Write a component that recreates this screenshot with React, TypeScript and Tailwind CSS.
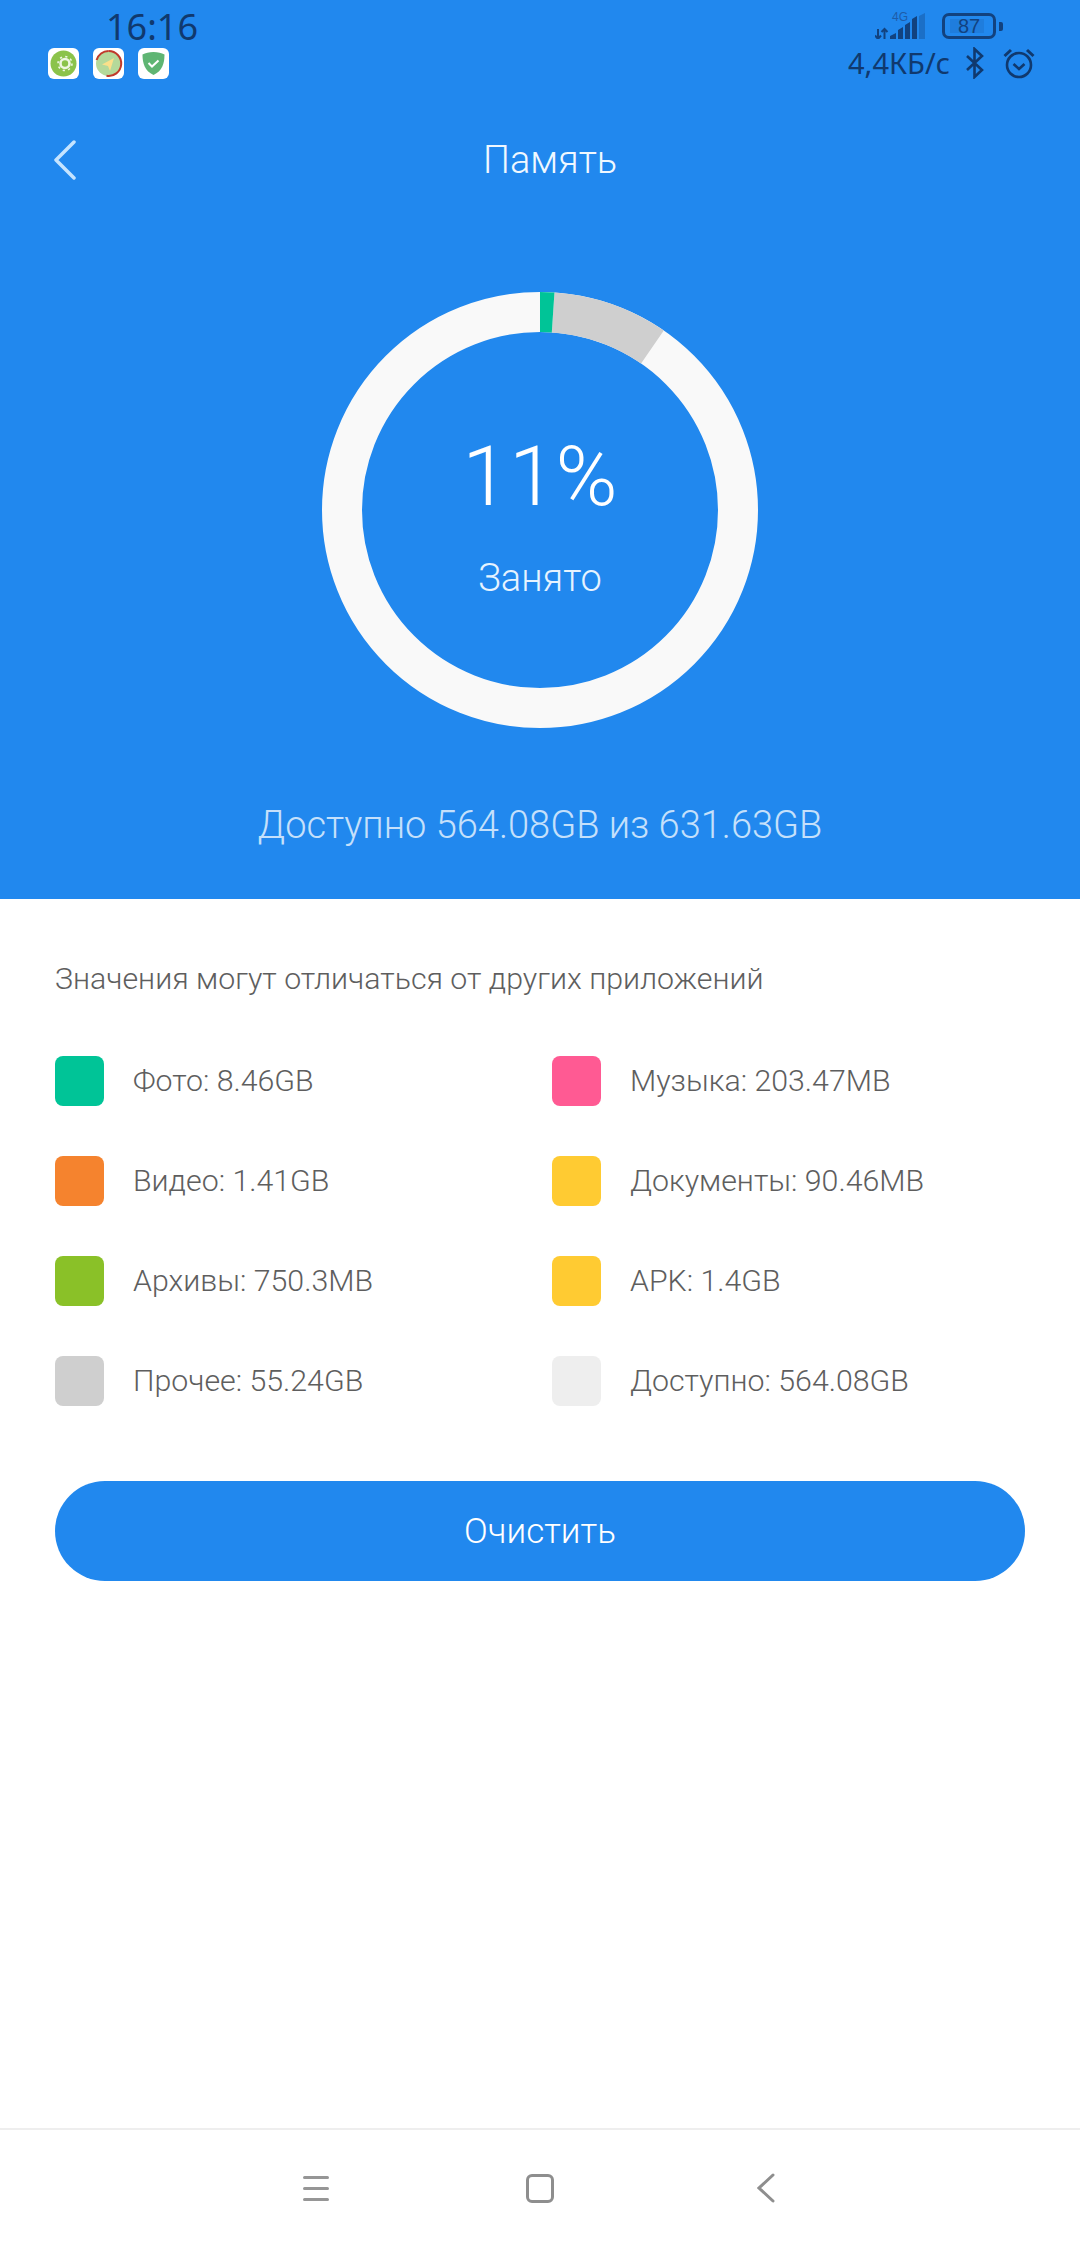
import React from "react";

const legend = [
  { label: "Фото: 8.46GB", color: "bg-[#00c497]" },
  { label: "Музыка: 203.47MB", color: "bg-[#ff5a93]" },
  { label: "Видео: 1.41GB", color: "bg-[#f5832e]" },
  { label: "Документы: 90.46MB", color: "bg-[#ffcb32]" },
  { label: "Архивы: 750.3MB", color: "bg-[#8ac128]" },
  { label: "APK: 1.4GB", color: "bg-[#ffcb32]" },
  { label: "Прочее: 55.24GB", color: "bg-[#cfcfcf]" },
  { label: "Доступно: 564.08GB", color: "bg-[#eeeeee]" },
];

// arc on the donut, angles in degrees clockwise from 12 o'clock
const arcPath = (from: number, to: number, r: number) => {
  const pt = (a: number) => {
    const rad = (a * Math.PI) / 180;
    return `${218 + r * Math.sin(rad)} ${218 - r * Math.cos(rad)}`;
  };
  return `M${pt(from)} A${r} ${r} 0 0 1 ${pt(to)}`;
};

const Donut = () => (
  <svg width="436" height="436" viewBox="0 0 436 436">
    <circle cx="218" cy="218" r="198" fill="none" stroke="#f9f9f9" strokeWidth="40" />
    <path d={arcPath(3.8, 34.6, 198)} fill="none" stroke="#cfcfcf" strokeWidth="40" />
    <path d={arcPath(0, 3.8, 198)} fill="none" stroke="#00c497" strokeWidth="40" />
  </svg>
);

const NotifIcons = () => (
  <div className="flex gap-[14px] pl-[48px]">
    <div className="w-[31px] h-[31px] rounded-[6px] bg-white flex items-center justify-center">
      <svg width="27" height="27" viewBox="0 0 27 27">
        <circle cx="13.5" cy="13.5" r="13" fill="#8bc34a" />
        <circle cx="15" cy="13.5" r="4.5" fill="none" stroke="#eef6e2" strokeWidth="2.6" />
        <circle cx="15" cy="13.5" r="7" fill="none" stroke="#eef6e2" strokeWidth="1.6" strokeDasharray="2.2 3.3" />
      </svg>
    </div>
    <div className="w-[31px] h-[31px] rounded-[6px] bg-white flex items-center justify-center">
      <svg width="29" height="29" viewBox="0 0 29 29">
        <circle cx="14.5" cy="14.5" r="12.5" fill="#b5d99a" />
        <path d="M14.5 2a12.5 12.5 0 1 1-2 24.8" fill="none" stroke="#c0392b" strokeWidth="2" />
        <path d="M2.6 11A12.5 12.5 0 0 1 14.5 2" fill="none" stroke="#c0392b" strokeWidth="2" />
        <path d="M20 9 8 15.500l6 1.500 2 5z" fill="#fbe08a" />
      </svg>
    </div>
    <div className="w-[31px] h-[31px] rounded-[6px] bg-white flex items-center justify-center">
      <svg width="23" height="25" viewBox="0 0 23 25">
        <path d="M11.5 1C7 1 3.500 2 .5 3.500c0 9 2.500 16.500 11 20.500 8.500-4 11-11.500 11-20.500C19.500 2 16 1 11.500 1z" fill="#5fb573" />
        <path d="m6.500 12 3.500 3.500 6.500-6" fill="none" stroke="#fff" strokeWidth="2" />
      </svg>
    </div>
  </div>
);

const SignalBars = () => (
  <svg width="52" height="26" viewBox="0 0 52 26">
    <g stroke="#12427f" strokeWidth="2" fill="none">
      <path d="M3 16v10M0 22.500l3 3.500 3-3.500M9.500 26V16M6.500 19l3-3 3 3" />
    </g>
    <path d="M15 26v-3l6-3v6zM23 26V17l5-3v12zM30 26V12l5-3v17zM37 26V6l5-3v23z" fill="#12427f" />
    <path d="M44 26V3l6-3v26z" fill="#12427f" fillOpacity="0.35" />
  </svg>
);

const StatusBar = () => (
  <div className="flex justify-between h-[84px]">
    <div className="flex flex-col">
      <div className="pl-[106px] h-[48px] pt-[3px] text-[36px] leading-[48px] text-[#10396e] font-['Noto_Sans',sans-serif]">
        16:16
      </div>
      <NotifIcons />
    </div>
    <div className="flex flex-col items-end pr-[45px] pt-[13px]">
      <div className="flex items-start h-[26px] mr-[39px] relative">
        <span className="absolute left-[17px] top-[-3px] text-[12px] leading-[14px] text-[#1e5ca8] font-['Liberation_Sans',sans-serif]">
          4G
        </span>
        <SignalBars />
        <div className="ml-[15px] w-[54px] h-[26px] rounded-[7px] border-[3px] border-[#12427f] relative flex items-center justify-center">
          <div className="absolute left-[5px] top-[3px] bottom-[3px] w-[34px] bg-[#12427f]/15" />
          <span className="relative text-[20px] leading-[20px] text-[#12427f] font-['Liberation_Sans',sans-serif]">87</span>
          <div className="absolute right-[-10px] top-[6px] w-[4px] h-[9px] rounded-r-[2px] bg-[#12427f]" />
        </div>
      </div>
      <div className="flex items-center mt-[7px] text-[#10396e]">
        <span className="text-[29px] leading-[34px] font-['Noto_Sans',sans-serif]">4,4КБ/с</span>
        <svg className="ml-[15px]" width="20" height="32" viewBox="0 0 20 32" fill="none" stroke="#10396e" strokeWidth="2.6">
          <path d="M2 9l15 14-7.500 7V2L17 9 2 23" />
        </svg>
        <svg className="ml-[18px]" width="32" height="32" viewBox="0 0 32 32" fill="none" stroke="#10396e" strokeWidth="2.6">
          <circle cx="16" cy="18" r="12" />
          <path d="M10.500 17l5.500 5 5.500-5" />
          <path d="M1.500 9 8 3M30.500 9 24 3" strokeWidth="3" />
        </svg>
      </div>
    </div>
  </div>
);

export default function App() {
  return (
    <div className="w-[1080px] h-[2246px] bg-white flex flex-col font-['Roboto',sans-serif]">
      <div className="bg-[#2188ee] h-[899px] flex flex-col">
        <StatusBar />
        <div className="flex items-center h-[52px] mt-[50px] pl-[53px]">
          <svg width="24" height="40" viewBox="0 0 24 40" fill="none" stroke="#c5e4ff" strokeWidth="3.500" strokeLinecap="round" strokeLinejoin="round">
            <path d="M21 2 3 20l18 18" />
          </svg>
          <span className="ml-[406px] text-[38px] leading-[52px] font-light text-[#f0f8ff]">Память</span>
        </div>
        <div className="flex justify-center mt-[106px] relative">
          <Donut />
          <div className="absolute inset-0 flex flex-col items-center pt-[135px]">
            <span className="text-[84px] leading-[100px] font-light text-white">11%</span>
            <span className="mt-[29px] text-[38px] leading-[44px] font-light text-[#e6f3ff]">Занято</span>
          </div>
        </div>
        <div className="mt-[75px] text-center text-[38px] leading-[44px] font-light text-[#c5e0fb]">
          Доступно 564.08GB из 631.63GB
        </div>
      </div>

      <div className="flex-1 flex flex-col px-[55px]">
        <div className="mt-[62px] text-[30.3px] leading-[36px] font-light text-[#5e5e5e]">
          Значения могут отличаться от других приложений
        </div>
        <div className="mt-[59px] grid grid-cols-[497px_1fr] gap-y-[50px]">
          {legend.map((item) => (
            <div key={item.label} className="flex items-center h-[50px]">
              <div className={`w-[49px] h-[50px] rounded-[8px] ${item.color}`} />
              <span className="ml-[29px] text-[30.3px] font-light text-[#5e5e5e]">{item.label}</span>
            </div>
          ))}
        </div>
        <button className="mt-[75px] h-[100px] w-[970px] pt-[2px] rounded-full bg-[#2188ee] text-[35px] font-light text-white">
          Очистить
        </button>
      </div>

      <div className="h-[118px] border-t-2 border-[#eeeeee] flex items-center relative">
        <div className="ml-[303px] w-[26px] flex flex-col gap-[8px]">
          <div className="h-[3px] rounded-full bg-[#969696]" />
          <div className="h-[3px] rounded-full bg-[#969696]" />
          <div className="h-[3px] rounded-full bg-[#969696]" />
        </div>
        <div className="ml-[197px] w-[28px] h-[29px] rounded-[6px] border-[3px] border-[#8e8e8e]" />
        <svg className="ml-[203px]" width="18" height="30" viewBox="0 0 18 30" fill="none" stroke="#8e8e8e" strokeWidth="3" strokeLinecap="round">
          <path d="M16 2 2 15l14 13" />
        </svg>
      </div>
    </div>
  );
}
